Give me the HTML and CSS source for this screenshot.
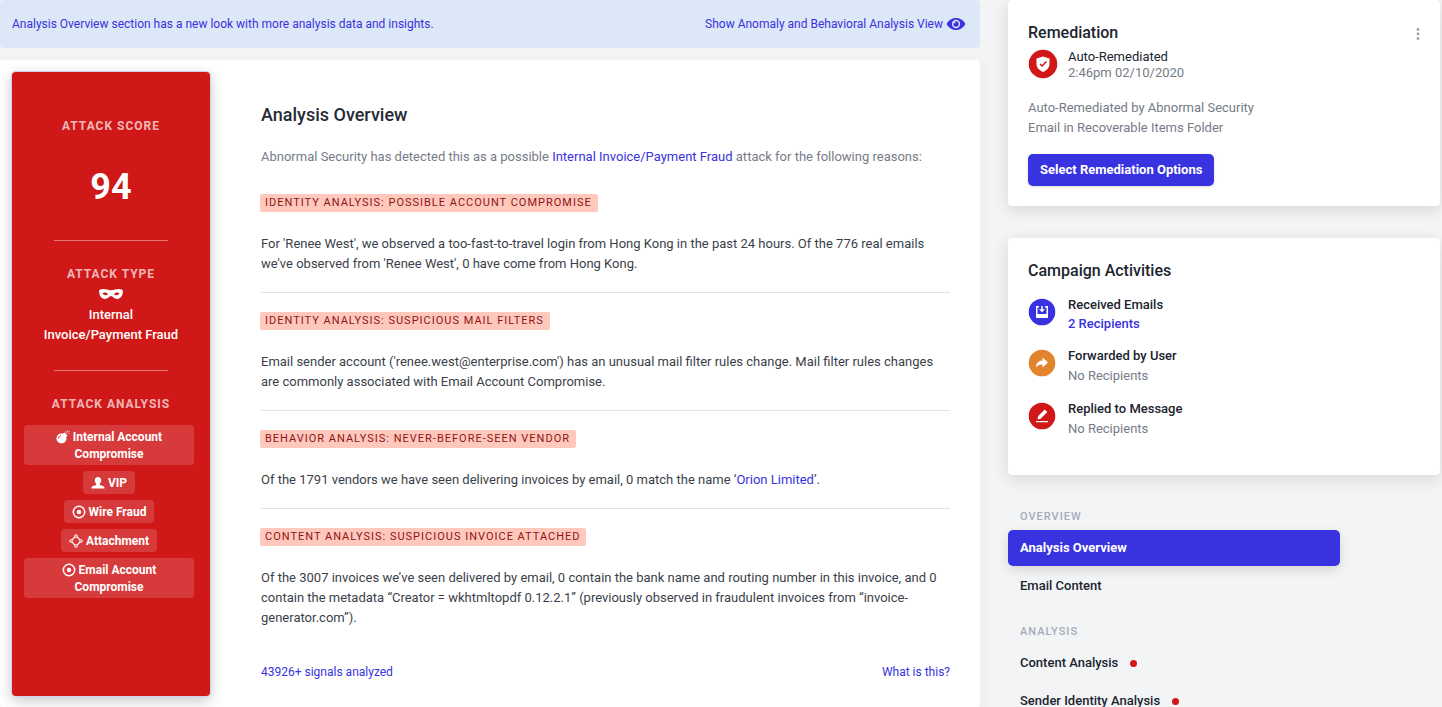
FILE: index.html
```
<!DOCTYPE html>
<html lang="en">

<head>
    <meta charset="UTF-8">
    <meta name="viewport" content="width=device-width, initial-scale=1.0">
    <title>Analysis Overview</title>
    <link rel="stylesheet" href="styles.css">
</head>

<body>
    <div class="page">
        <main class="main">
            <div class="banner">
                <span>Analysis Overview section has a new look with more analysis data and insights.</span>
                <a href="#" class="banner_link">Show Anomaly and Behavioral Analysis View
                    <svg width="20" height="14" viewBox="0 0 20 14">
                        <path d="M0.500 7C3 2.800 6.300 1 10 1s7 1.800 9.500 6c-2.500 4.200-5.800 6-9.500 6S3 11.200 0.500 7z" fill="#3832e0" />
                        <circle cx="10" cy="7" r="3.400" fill="#3832e0" stroke="#dce7f7" stroke-width="1.500" />
                        <circle cx="8.600" cy="5.600" r="0.900" fill="#dce7f7" />
                    </svg>
                </a>
            </div>

            <div class="card overview">
                <aside class="attack">
                    <h3>Attack Score</h3>
                    <p class="score">94</p>
                    <hr>
                    <h3>Attack Type</h3>
                    <svg class="mask" width="24" height="12" viewBox="0 0 24 12">
                        <path fill="#fff" fill-rule="evenodd" d="M0.300 2C2.500 0.600 5.500 0.700 8 1.500c2.500 0.900 5.500 0.900 8 0 2.500-0.800 5.500-0.900 7.700 0.500 0.600 4-1.200 9-5.700 9-3 0-4-3-6-3s-3 3-6 3C1.500 11-0.300 6 0.300 2zM3.500 5.500c1.300 2 4 2.200 5.500 0.700-1.300-2-4-2.200-5.500-0.700zM20.500 5.500c-1.300 2-4 2.200-5.500 0.700 1.300-2 4-2.200 5.500-0.700z" />
                    </svg>
                    <p class="type">Internal Invoice/Payment Fraud</p>
                    <hr>
                    <h3>Attack Analysis</h3>
                    <div class="tags">
                        <span class="tag">
                            <svg width="14" height="14" viewBox="0 0 14 14">
                                <circle cx="5.500" cy="8.500" r="5" fill="#fff" />
                                <path d="M7 3.500l3.500 3.500 1-1.500L8.500 2.500z" fill="#fff" />
                                <path d="M2.500 8.500a3 3 0 0 1 2.500-3" fill="none" stroke="#d63a3c" />
                                <path d="M10 3.500l1-1.500M11.500 0.500v1M13.500 1l-1 1M12.500 3.500h1M9 1l0.700 0.700" fill="none" stroke="#fff" stroke-width="0.800" />
                            </svg>
                            Internal Account Compromise</span>
                        <span class="tag">
                            <svg width="14" height="14" viewBox="0 0 14 14">
                                <path d="M7 1c2 0 3.200 1.400 3.200 3.300 0 1.500-.5 2.700-1.400 3.500v1.200l3.200 1c.9.300 1.500 1 1.500 2v.500H.5V12c0-1 .6-1.700 1.500-2l3.200-1V7.800C4.300 7 3.800 5.800 3.800 4.300 3.800 2.400 5 1 7 1z" fill="#fff" />
                            </svg>
                            VIP</span>
                        <span class="tag">
                            <svg width="14" height="14" viewBox="0 0 14 14">
                                <circle cx="7" cy="7" r="5.700" fill="none" stroke="#fff" stroke-width="1.500" />
                                <circle cx="7" cy="7" r="2.200" fill="#fff" />
                            </svg>
                            Wire Fraud</span>
                        <span class="tag">
                            <svg width="14" height="14" viewBox="0 0 14 14">
                                <path d="M5.800 3L3 5.800M8.200 3L11 5.800M3 8.200L5.800 11M11 8.200L8.200 11" stroke="#fff" stroke-width="1.200" />
                                <g fill="none" stroke="#fff">
                                    <circle cx="7" cy="2" r="1.300" />
                                    <circle cx="2" cy="7" r="1.300" />
                                    <circle cx="12" cy="7" r="1.300" />
                                    <circle cx="7" cy="12" r="1.300" />
                                </g>
                            </svg>
                            Attachment</span>
                        <span class="tag">
                            <svg width="14" height="14" viewBox="0 0 14 14">
                                <circle cx="7" cy="7" r="5.700" fill="none" stroke="#fff" stroke-width="1.500" />
                                <circle cx="7" cy="7" r="2.200" fill="#fff" />
                            </svg>
                            Email Account Compromise</span>
                    </div>
                </aside>

                <div class="content">
                    <h1>Analysis Overview</h1>
                    <p class="intro">Abnormal Security has detected this as a possible <a href="#">Internal Invoice/Payment Fraud</a> attack for the following reasons:</p>

                    <section class="reason">
                        <h2>Identity Analysis: Possible Account Compromise</h2>
                        <p>For 'Renee West', we observed a too-fast-to-travel login from Hong Kong in the past 24 hours. Of the 776 real emails we've observed from 'Renee West', 0 have come from Hong Kong.</p>
                    </section>
                    <section class="reason">
                        <h2>Identity Analysis: Suspicious Mail Filters</h2>
                        <p>Email sender account ('renee.west@enterprise.com') has an unusual mail filter rules change. Mail filter rules changes are commonly associated with Email Account Compromise.</p>
                    </section>
                    <section class="reason">
                        <h2>Behavior Analysis: Never-Before-Seen Vendor</h2>
                        <p>Of the 1791 vendors we have seen delivering invoices by email, 0 match the name ‘<a href="#">Orion Limited</a>’.</p>
                    </section>
                    <section class="reason">
                        <h2>Content Analysis: Suspicious Invoice Attached</h2>
                        <p>Of the 3007 invoices we’ve seen delivered by email, 0 contain the bank name and routing number in this invoice, and 0 contain the metadata “Creator = wkhtmltopdf 0.12.2.1” (previously observed in fraudulent invoices from “invoice-generator.com”).</p>
                    </section>

                    <div class="content_footer">
                        <a href="#">43926+ signals analyzed</a>
                        <a href="#">What is this?</a>
                    </div>
                </div>
            </div>
        </main>

        <aside class="sidebar">
            <section class="card remediation">
                <div class="card_head">
                    <h2>Remediation</h2>
                    <button type="button" class="more" aria-label="More options">
                        <svg width="4" height="12" viewBox="0 0 4 12" fill="#9aa1ad">
                            <circle cx="2" cy="1.500" r="1.400" />
                            <circle cx="2" cy="6" r="1.400" />
                            <circle cx="2" cy="10.500" r="1.400" />
                        </svg>
                    </button>
                </div>
                <div class="status">
                    <svg width="30" height="30" viewBox="0 0 30 30">
                        <circle cx="15" cy="15" r="14.300" fill="#d01818" />
                        <path d="M15 7.500l6.500 2v5.500c0 3.500-2.500 6.200-6.500 8-4-1.800-6.500-4.500-6.500-8V9.500z" fill="#fff" />
                        <path d="M12 15l2 2 4.500-4.500" fill="none" stroke="#d01818" stroke-width="1.500" />
                    </svg>
                    <div>
                        <p class="dark">Auto-Remediated</p>
                        <p>2:46pm 02/10/2020</p>
                    </div>
                </div>
                <p class="details">Auto-Remediated by Abnormal Security<br>Email in Recoverable Items Folder</p>
                <button type="button" class="btn">Select Remediation Options</button>
            </section>

            <section class="card campaign">
                <h2>Campaign Activities</h2>
                <div class="activity">
                    <svg width="28" height="28" viewBox="0 0 28 28">
                        <circle cx="14" cy="14" r="13.300" fill="#3832e0" />
                        <path d="M8 8h3v1.500H9.500V16h9V9.500H17V8h3v12H8z" fill="#fff" />
                        <path d="M13.300 8h1.500v3.200H17l-3 3-3-3h2.300z" fill="#fff" />
                    </svg>
                    <div>
                        <h3>Received Emails</h3>
                        <a href="#">2 Recipients</a>
                    </div>
                </div>
                <div class="activity">
                    <svg width="28" height="28" viewBox="0 0 28 28">
                        <circle cx="14" cy="14" r="13.300" fill="#e2832e" />
                        <path d="M14.500 8.500l5.500 5-5.500 5v-3c-3.500 0-5.200 1-6.500 3 0-4.200 2.500-6.800 6.500-7z" fill="#fff" />
                    </svg>
                    <div>
                        <h3>Forwarded by User</h3>
                        <p>No Recipients</p>
                    </div>
                </div>
                <div class="activity">
                    <svg width="28" height="28" viewBox="0 0 28 28">
                        <circle cx="14" cy="14" r="13.300" fill="#d01818" />
                        <path d="M8 19h12v1.300H8zM9.500 17.500l.7-3.500 6.500-6.500 2.600 2.600-6.400 6.500z" fill="#fff" />
                    </svg>
                    <div>
                        <h3>Replied to Message</h3>
                        <p>No Recipients</p>
                    </div>
                </div>
            </section>

            <nav class="nav">
                <h4>Overview</h4>
                <a href="#" class="active">Analysis Overview</a>
                <a href="#">Email Content</a>
                <h4>Analysis</h4>
                <a href="#">Content Analysis<span class="dot"></span></a>
                <a href="#">Sender Identity Analysis<span class="dot"></span></a>
            </nav>
        </aside>
    </div>
</body>

</html>
```

FILE: styles.css
```
* {
    box-sizing: border-box;
}

body {
    margin: 0;
    background-color: #f3f4f6;
    font-family: Roboto, "Liberation Sans", sans-serif;
    font-size: 13px;
    line-height: 20px;
    color: #3b3f4a;
}

h1, h2, h3, h4, p {
    margin: 0;
}

a {
    color: #3832e0;
    text-decoration: none;
}

svg {
    flex-shrink: 0;
}

.page {
    display: grid;
    grid-template-columns: minmax(0, 1fr) 432px;
    gap: 28px;
    padding-right: 2px;
    height: 100vh;
    overflow: hidden;
}

.banner {
    display: flex;
    align-items: center;
    justify-content: space-between;
    height: 48px;
    padding: 0 14px 0 12px;
    margin-bottom: 12px;
    border-radius: 4px;
    background-color: #dce7f7;
    color: #3832e0;
    font-size: 12px;
}

.banner_link {
    display: flex;
    align-items: center;
    gap: 3px;
}

.card {
    background-color: #fff;
    border-radius: 4px;
    box-shadow: 0 4px 16px rgba(0, 0, 0, 0.12);
}

.overview {
    display: flex;
    padding: 12px 30px 12px 12px;
    box-shadow: 0 4px 16px rgba(40, 60, 90, 0.06);
}

.attack {
    display: flex;
    flex-direction: column;
    align-items: center;
    flex-shrink: 0;
    width: 198px;
    min-height: 624px;
    padding: 44px 12px 0;
    border-radius: 4px;
    background-color: #d01818;
    box-shadow: 0 0 0 1px #cdd3e4, 0 4px 14px rgba(0, 0, 0, 0.25);
    color: #fff;
    text-align: center;
}

.attack h3 {
    font-size: 12px;
    font-weight: 700;
    letter-spacing: 1px;
    text-transform: uppercase;
    color: rgba(255, 255, 255, 0.7);
}

.score {
    margin: 29px 0 31px;
    font-size: 36px;
    line-height: 44px;
    font-weight: 700;
}

.attack hr {
    width: 114px;
    height: 1px;
    margin: 0 0 23px;
    border: none;
    background-color: rgba(255, 255, 255, 0.4);
}

.mask {
    margin: 4px 0 5px;
}

.type {
    margin-bottom: 25px;
    padding: 0 16px;
    font-weight: 500;
}

.tags {
    display: flex;
    flex-direction: column;
    align-items: center;
    gap: 6px;
    width: 170px;
    margin: 11px 4px 0 0;
}

.tag {
    padding: 4px 8px 2px;
    border-radius: 4px;
    background-color: rgba(255, 255, 255, 0.15);
    font-size: 12px;
    line-height: 17px;
    font-weight: 700;
}

.tag svg {
    vertical-align: -3px;
}

.content {
    flex: 1;
    padding: 31px 0 12px 51px;
}

h1 {
    margin-bottom: 20px;
    font-size: 18px;
    line-height: 24px;
    font-weight: 500;
    color: #262a35;
}

.intro {
    margin-bottom: 8px;
    color: #767b88;
}

.reason {
    padding: 19px 0 18px;
    border-bottom: 1px solid #e1e4ec;
}

.reason:last-of-type {
    border-bottom: none;
}

.reason h2 {
    width: fit-content;
    margin: 0 0 22px -1px;
    padding: 0 6px 0 5px;
    border-radius: 2px;
    background-color: #ffc8bd;
    color: #8f1414;
    font-size: 11px;
    line-height: 18px;
    font-weight: 400;
    letter-spacing: 1px;
    text-transform: uppercase;
}

.content_footer {
    display: flex;
    justify-content: space-between;
    margin-top: 16px;
    font-size: 12px;
}

.sidebar h2 {
    font-size: 16px;
    line-height: 24px;
    font-weight: 500;
    color: #20242e;
}

.remediation {
    margin-bottom: 32px;
    padding: 21px 20px 20px;
    color: #767b88;
}

.card_head {
    display: flex;
    align-items: center;
    justify-content: space-between;
}

.more {
    display: flex;
    padding: 2px 0 0;
    border: none;
    background: none;
}

.status {
    display: flex;
    align-items: center;
    gap: 10px;
    margin: 4px 0 17px;
    line-height: 16px;
}

.status svg {
    margin-bottom: 2px;
}

.dark {
    color: #20242e;
}

.btn {
    display: block;
    height: 32px;
    margin-top: 16px;
    padding: 0 12px 2px;
    border: none;
    border-radius: 5px;
    background-color: #3832e0;
    box-shadow: 0 1px 3px rgba(0, 0, 0, 0.15);
    color: #fff;
    font-family: inherit;
    font-size: 13px;
    font-weight: 700;
}

.campaign {
    margin-bottom: 32px;
    padding: 21px 20px 23px;
    color: #767b88;
}

.campaign h2 {
    margin-bottom: 12px;
}

.activity {
    display: flex;
    gap: 12px;
    margin-bottom: 13px;
}

.activity svg {
    margin-top: 3px;
}

.activity h3 {
    font-size: 13px;
    font-weight: 500;
    color: #20242e;
}

.activity a {
    display: block;
    line-height: 18px;
    font-weight: 500;
}

.nav {
    width: 332px;
}

.nav h4 {
    padding: 0 12px;
    margin-bottom: 3px;
    font-size: 11px;
    font-weight: 500;
    letter-spacing: 1px;
    text-transform: uppercase;
    color: #a5acb9;
}

.nav a {
    display: flex;
    align-items: center;
    height: 36px;
    margin-bottom: 2px;
    padding: 0 12px;
    border-radius: 5px;
    color: #20242e;
    font-weight: 500;
}

.nav .active {
    background-color: #3832e0;
    box-shadow: 0 4px 12px rgba(0, 0, 0, 0.12);
    color: #fff;
    font-weight: 700;
}

.nav a + h4 {
    margin-top: 18px;
}

.dot {
    width: 7px;
    height: 7px;
    margin-left: 12px;
    border-radius: 50%;
    background-color: #d01818;
}
```
